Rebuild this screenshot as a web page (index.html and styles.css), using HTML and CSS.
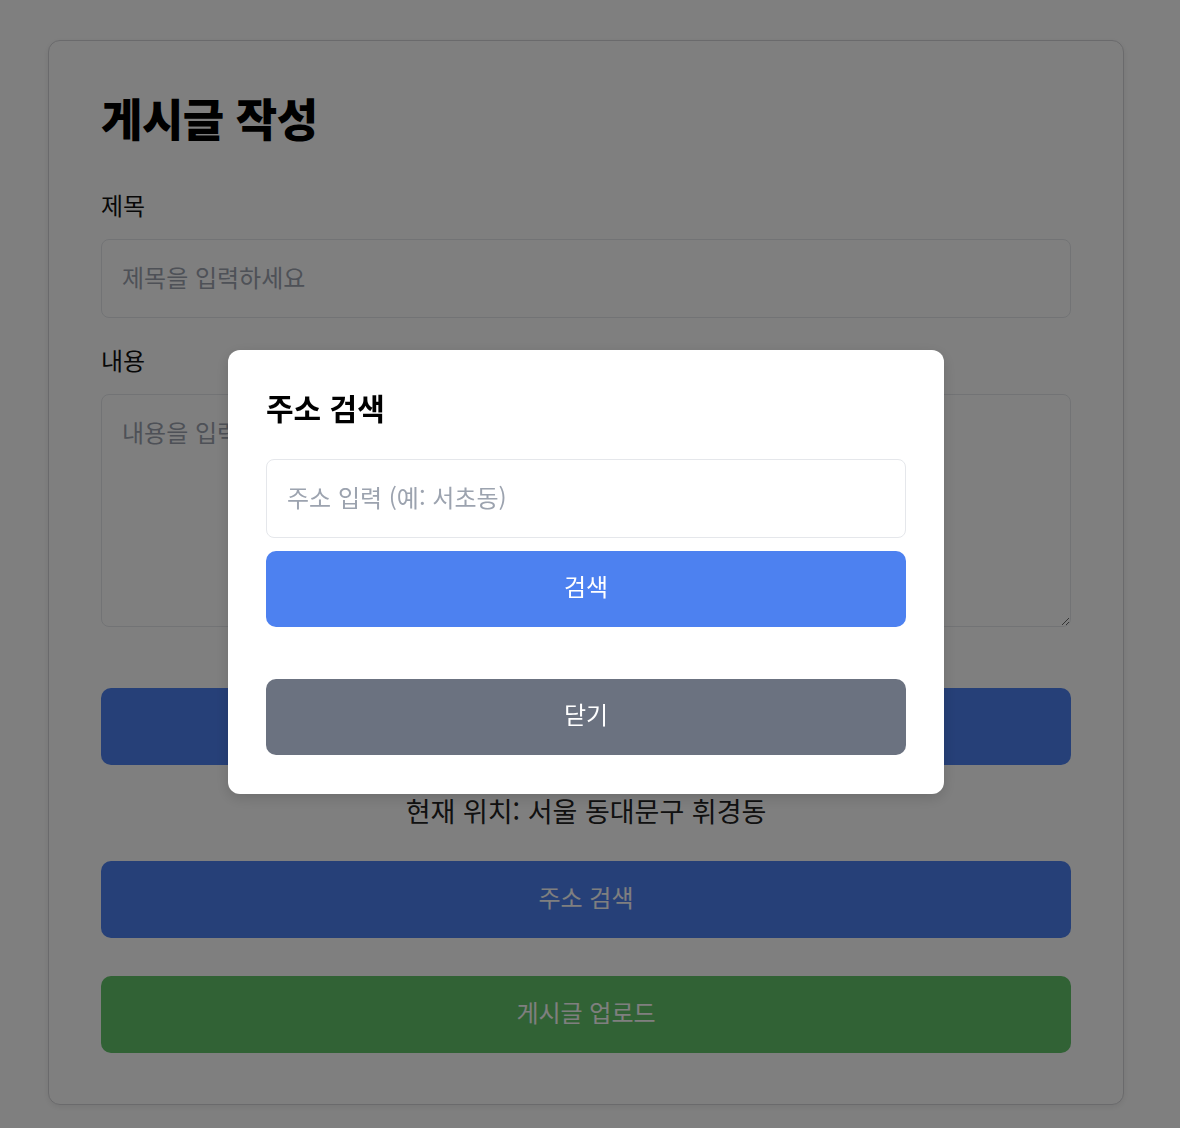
FILE: index.html
```html
<!DOCTYPE html>
<html lang="ko">
<head>
    <meta charset="UTF-8">
    <meta name="viewport" content="width=device-width, initial-scale=1.0">
    <title>게시글 작성</title>
    <link rel="stylesheet" href="styles.css">
</head>
<body>
    <div class="page">
        <div class="post-card">
            <h1 class="post-title">게시글 작성</h1>

            <label class="field-label" for="title-input">제목</label>
            <input class="text-input" id="title-input" type="text" placeholder="제목을 입력하세요">

            <label class="field-label" for="content-input">내용</label>
            <textarea class="text-area" id="content-input" placeholder="내용을 입력하세요"></textarea>

            <!-- 모달에 가려진 버튼 -->
            <button class="btn btn-blue btn-first" aria-label="현재 위치"></button>

            <p class="location-text">현재 위치: 서울 동대문구 휘경동</p>

            <button class="btn btn-blue">주소 검색</button>
            <button class="btn btn-green">게시글 업로드</button>
        </div>
    </div>

    <!-- 주소 검색 모달 -->
    <div class="modal-overlay">
        <div class="modal-box">
            <h2 class="modal-title">주소 검색</h2>
            <input class="text-input modal-input" type="text" placeholder="주소 입력 (예: 서초동)">
            <button class="btn btn-blue modal-btn">검색</button>
            <button class="btn btn-gray modal-btn modal-close">닫기</button>
        </div>
    </div>
</body>
</html>
```

FILE: styles.css
```css
/* 기본 */
* {
    box-sizing: border-box;
    margin: 0;
    padding: 0;
}

body {
    font-family: "Noto Sans CJK KR", "Noto Sans", sans-serif;
    background: #fff;
    color: #111;
}

.page {
    padding: 40px 56px 23px 48px;
}

/* 카드 */
.post-card {
    display: flex;
    flex-direction: column;
    background: #fff;
    border: 1px solid #d4d4d8;
    border-radius: 12px;
    padding: 50px 52px 51px;
    box-shadow: 0 2px 6px rgba(0, 0, 0, 0.08);
}

.post-title {
    font-size: 45px;
    font-weight: 800;
    letter-spacing: -0.5px;
    line-height: 53px;
    color: #000;
    margin-bottom: 45px;
}

.field-label {
    font-size: 24px;
    line-height: 32px;
    margin-bottom: 18px;
}

/* 입력창 */
.text-input,
.text-area {
    font-family: inherit;
    font-size: 24px;
    line-height: 35px;
    padding: 19px 20px 23px;
    border: 1px solid #e5e7eb;
    border-radius: 8px;
    background: #fff;
    color: #111;
    width: 100%;
    outline: none;
}

.text-input::placeholder,
.text-area::placeholder {
    color: #9ca3af;
}

.text-input {
    margin-bottom: 26px;
}

.text-area {
    height: 233px;
    resize: vertical;
    display: block;
}

/* 버튼 */
.btn {
    font-family: inherit;
    font-size: 24px;
    line-height: 37px;
    padding: 17px 20px 23px;
    border: none;
    border-radius: 10px;
    color: #fff;
    width: 100%;
    cursor: pointer;
}

.btn-blue {
    background: #4d81f0;
}

.btn-green {
    background: #62c46a;
    margin-top: 38px;
}

.btn-gray {
    background: #6b7280;
}

.btn-first {
    margin-top: 61px;
    height: 77px;
}

.location-text {
    text-align: center;
    font-size: 27px;
    line-height: 40px;
    color: #222;
    margin: 26px 0 30px;
}

/* 모달 */
.modal-overlay {
    position: fixed;
    inset: 0;
    background: rgba(0, 0, 0, 0.5);
    display: flex;
    justify-content: center;
    align-items: center;
    padding: 16px 8px 0 0;
}

.modal-box {
    width: 716px;
    background: #fff;
    border-radius: 12px;
    padding: 37px 38px 39px;
    display: flex;
    flex-direction: column;
    box-shadow: 0 4px 14px rgba(0, 0, 0, 0.15);
}

.modal-title {
    font-size: 30px;
    font-weight: 700;
    line-height: 40px;
    color: #000;
    margin-bottom: 32px;
}

.modal-input {
    margin-bottom: 13px;
}

.modal-btn {
    line-height: 36px;
}

.modal-close {
    margin-top: 52px;
}
```
